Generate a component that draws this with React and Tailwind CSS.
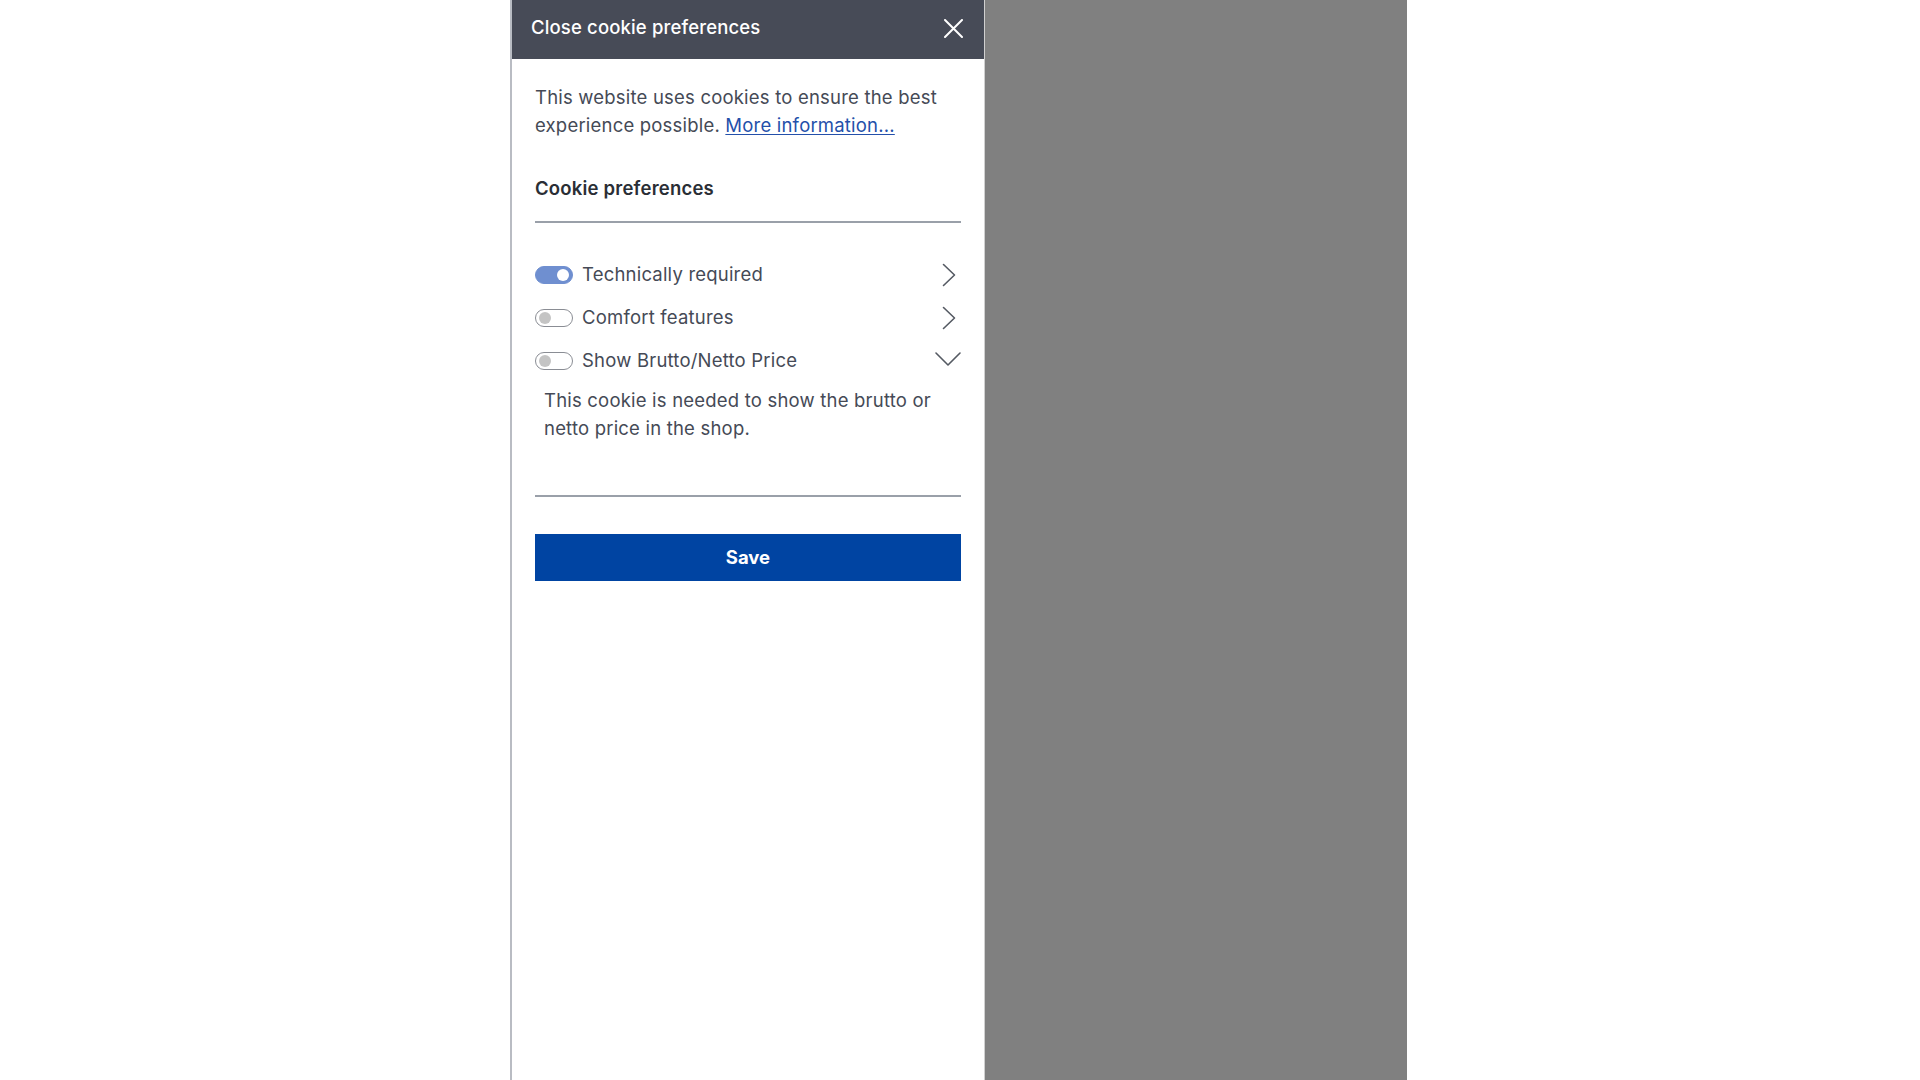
import React, { useState } from "react";

function Toggle({ on }) {
  return (
    <span
      className={
        "relative inline-flex h-[18px] w-[38px] shrink-0 items-center rounded-full border " +
        (on ? "border-[#6f8fd0] bg-[#6f8fd0]" : "border-[#8a8d94] bg-white")
      }
    >
      <span
        className={
          "absolute top-1/2 h-[12px] w-[12px] -translate-y-1/2 rounded-full " +
          (on ? "right-[3px] bg-white" : "left-[3px] bg-[#c4c4c4]")
        }
      />
    </span>
  );
}

function ChevronRight() {
  return (
    <svg width="14" height="24" viewBox="0 0 14 24" fill="none" className="mr-[5px] shrink-0">
      <path d="M1.5 1.5 L12.5 12 L1.5 22.5" stroke="#555a63" strokeWidth="1.6" strokeLinecap="round" strokeLinejoin="round" />
    </svg>
  );
}

function ChevronDown() {
  return (
    <svg width="26" height="16" viewBox="0 0 26 16" fill="none" className="-mt-[3px] shrink-0">
      <path d="M1 2 L13 14 L25 2" stroke="#555a63" strokeWidth="1.6" strokeLinecap="round" strokeLinejoin="round" />
    </svg>
  );
}

function PrefRow({ label, on, open, children }) {
  return (
    <div>
      <div className="flex h-[43px] items-center">
        <Toggle on={on} />
        <span className="ml-[9px] flex-1 text-[18.5px] tracking-[0.2px] text-[#454a56]">{label}</span>
        <span className="flex w-[26px] justify-end">{open ? <ChevronDown /> : <ChevronRight />}</span>
      </div>
      {children}
    </div>
  );
}

export default function App() {
  const [prefs] = useState([
    { label: "Technically required", on: true },
    { label: "Comfort features", on: false },
  ]);

  return (
    <div
      className="flex h-screen w-full bg-white"
      style={{ fontFamily: "Inter, 'Noto Sans', Arial, sans-serif" }}
    >
      <div className="w-[510px] shrink-0" />

      <aside className="flex w-[474px] shrink-0 flex-col border-l-2 border-[#b9bcc3] bg-white">
        <header className="flex h-[59px] shrink-0 items-center justify-between bg-[#474b57] pb-[3px] pl-[19px] pr-[21px]">
          <span className="text-[18.5px] font-medium tracking-[0.15px] text-white">Close cookie preferences</span>
          <svg width="19" height="19" viewBox="0 0 19 19" fill="none">
            <path d="M1 1 L18 18 M18 1 L1 18" stroke="#ffffff" strokeWidth="2" strokeLinecap="round" />
          </svg>
        </header>

        <div className="pl-[23px] pr-[23px] pt-[24px]">
          <p className="text-[18.5px] leading-[28px] tracking-[0.2px] text-[#454a56]">
            This website uses cookies to ensure the best experience possible.{" "}
            <a href="#" className="text-[#2450aa] underline underline-offset-2">
              More information...
            </a>
          </p>

          <h2 className="mt-[35px] text-[18.5px] font-semibold leading-[28px] tracking-[0.2px] text-[#2a2e35]">
            Cookie preferences
          </h2>

          <div className="mt-[19px] border-t-2 border-[#9aa0a9]" />

          <div className="pt-[30px]">
            {prefs.map((p) => (
              <PrefRow key={p.label} label={p.label} on={p.on} />
            ))}
            <PrefRow label="Show Brutto/Netto Price" on={false} open>
              <p className="pl-[9px] pt-[4px] text-[18.5px] leading-[28px] tracking-[0.2px] text-[#454a56]">
                This cookie is needed to show the brutto or netto price in the shop.
              </p>
            </PrefRow>
          </div>

          <div className="mt-[53px] border-t-2 border-[#9aa0a9]" />

          <button className="mt-[37px] flex h-[47px] w-full items-center justify-center bg-[#0044a2] text-[18.5px] font-bold text-white">
            Save
          </button>
        </div>
      </aside>

      <div className="w-[423px] shrink-0 border-l border-[#d0d0d0] bg-[#808080]" />
      <div className="flex-1" />
    </div>
  );
}
